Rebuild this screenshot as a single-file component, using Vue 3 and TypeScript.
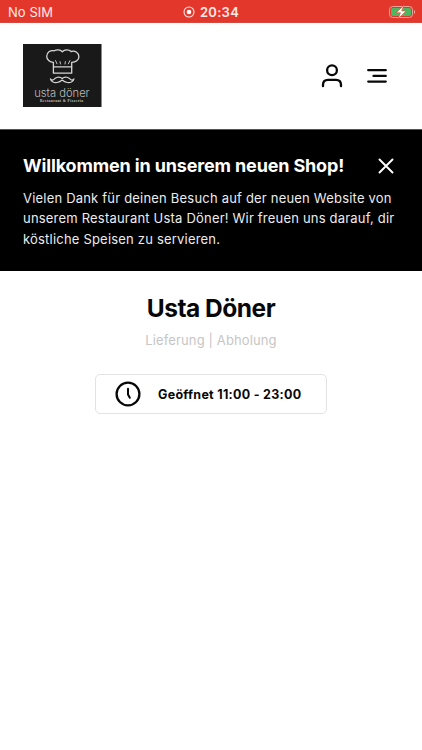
<script setup lang="ts">
import { ref } from 'vue'

const bannerOpen = ref<boolean>(true)
const shop = {
  name: 'Usta Döner',
  services: ['Lieferung', 'Abholung'],
  hours: 'Geöffnet 11:00 - 23:00',
}
</script>

<template>
  <div class="screen">
    <div class="status">
      <span class="carrier">No SIM</span>
      <span class="clock">
        <svg width="12" height="12" viewBox="0 0 12 12">
          <circle cx="6" cy="6" r="5" fill="none" stroke="#fbe3e0" stroke-width="1.1" />
          <circle cx="6" cy="6" r="2.3" fill="#fff" />
        </svg>
        <span class="time">20:34</span>
      </span>
      <svg class="battery" width="27" height="16" viewBox="0 0 27 16">
        <rect x="0.5" y="2.5" width="23" height="11" rx="3.2" fill="none" stroke="#f3a29b" />
        <rect x="2" y="4" width="20" height="8" rx="1.8" fill="#4cb661" />
        <path d="M25 6v4c1.6-.6 1.6-3.4 0-4z" fill="#f3a29b" />
        <path d="M14.8 1.2 7.3 8.7h4.2L9.2 14.8l7.8-7.9h-4.3z" fill="#fff" stroke="#e2483b" stroke-width="0.6" />
      </svg>
    </div>

    <header class="header">
      <svg class="logo" width="79" height="63" viewBox="0 0 79 63">
        <rect width="78.5" height="63" fill="#191919" />
        <g fill="none" stroke="#d6d6d6" stroke-width="1.3" stroke-linecap="round" stroke-linejoin="round">
          <path d="M30.4 22.8v-4.5c-3.7-.1-6.7-2.6-6.7-6 0-3.7 3.5-6.4 7.6-5.5 2-1.2 6-1.3 8 .9 2.2-2.4 6.8-2.2 8.8-.2 4.2-1.1 7.8 1.4 7.8 5.2 0 3.2-3.1 5.7-7.2 5.6v4.5" />
          <path d="M30.4 22.8h18.3v6.4H30.4z" />
          <path d="M34 19.8l-1.5-3.2M37.5 20l-.5-2.4M42 20l.4-2.4M45.4 19.8l1.5-3.2" stroke-width="0.9" />
          <path d="M39.2 34.5c-3-2.8-6.8-.9-8 .7-1.1 1.2-2.3 1.2-3.8-.3.6 3.1 4 4.1 6.7 3.6 2.5-.5 4.2-1.7 5.1-2.5.9.8 2.6 2 5.1 2.5 2.7.5 6.1-.5 6.7-3.6-1.5 1.5-2.7 1.5-3.8.3-1.2-1.6-5-3.5-8-.7z" stroke-width="1.15" />
        </g>
        <text class="logo-name" x="38.9" y="53.4" text-anchor="middle" textLength="55.5" lengthAdjust="spacingAndGlyphs">usta döner</text>
        <text class="logo-sub" x="38.5" y="58" text-anchor="middle" textLength="43">Restaurant &amp; Pizzeria</text>
      </svg>
      <nav class="actions">
        <svg width="22" height="24" viewBox="0 0 22 24" fill="none" stroke="#080808" stroke-width="2.3" stroke-linecap="round">
          <circle cx="11" cy="6.3" r="4.9" />
          <path d="M2 22.2v-1.4c0-3.1 2-5 5-5h8c3 0 5 1.9 5 5v1.4" />
        </svg>
        <svg width="22" height="24" viewBox="0 0 22 24" fill="none" stroke="#080808" stroke-width="2.2" stroke-linecap="round">
          <path d="M2.2 6.2h17.6M7.5 11.9h12.3M2.2 17.6h17.6" />
        </svg>
      </nav>
    </header>

    <section v-if="bannerOpen" class="banner">
      <div class="banner-head">
        <h2>Willkommen in unserem neuen Shop!</h2>
        <button class="close" aria-label="Schließen" @click="bannerOpen = false">
          <svg width="16" height="16" viewBox="0 0 16 16" fill="none" stroke="#fff" stroke-width="1.9" stroke-linecap="round">
            <path d="M1.5 1.5l13 13M14.5 1.5l-13 13" />
          </svg>
        </button>
      </div>
      <p>
        Vielen Dank für deinen Besuch auf der neuen Website von<br />
        unserem Restaurant Usta Döner! Wir freuen uns darauf, dir<br />
        köstliche Speisen zu servieren.
      </p>
    </section>

    <main class="shop">
      <h1>{{ shop.name }}</h1>
      <p class="services">{{ shop.services.join(' | ') }}</p>
      <div class="hours">
        <svg width="26" height="26" viewBox="0 0 26 26" fill="none" stroke="#080808" stroke-width="2.3" stroke-linecap="round" stroke-linejoin="round">
          <circle cx="13" cy="13" r="11.4" />
          <path d="M13 7.7v5.8l1.8 3.3" stroke-width="2" />
        </svg>
        <span>{{ shop.hours }}</span>
      </div>
    </main>
  </div>
</template>

<style>
body {
  background: #fff;
}
</style>

<style scoped>
.screen {
  min-height: 750px;
  background: #fff;
  color: #080808;
  font-family: Inter, 'Liberation Sans', sans-serif;
}
h1,
h2,
p {
  margin: 0;
}
.status {
  box-sizing: border-box;
  height: 23px;
  padding: 1px 6px 0 8px;
  display: grid;
  grid-template-columns: 1fr auto 1fr;
  align-items: center;
  background: #e3372c;
  border-bottom: 1px solid #d8493f;
  color: #fde9e7;
}
.carrier {
  font-size: 13px;
  letter-spacing: 0.05px;
}
.clock {
  display: flex;
  align-items: center;
  gap: 5px;
  padding-right: 2px;
}
.time {
  font-size: 13px;
  font-weight: 600;
  letter-spacing: 0.3px;
}
.battery {
  justify-self: end;
}
.header {
  box-sizing: border-box;
  height: 106px;
  padding: 0 34px 1px 23px;
  display: flex;
  align-items: center;
  justify-content: space-between;
}
.logo {
  display: block;
}
.logo-name {
  font: 300 11px Inter, sans-serif;
  fill: #bcbcbc;
}
.logo-sub {
  font: 700 3.6px 'Liberation Serif', serif;
  fill: #c4c4c4;
}
.actions {
  display: flex;
  gap: 23px;
}
.banner {
  box-sizing: border-box;
  height: 142px;
  padding: 23px 23px 0;
  background: #000;
  border-top: 1px solid #555;
  color: #fff;
}
.banner-head {
  display: flex;
  align-items: center;
  justify-content: space-between;
  height: 25px;
  padding-right: 5px;
}
h2 {
  font-size: 18px;
  line-height: 25px;
  font-weight: 700;
  letter-spacing: -0.15px;
  white-space: nowrap;
}
.close {
  display: flex;
  padding: 0;
  border: 0;
  background: none;
}
.banner p {
  margin-top: 10px;
  color: #ececec;
  font-size: 13px;
  line-height: 20.4px;
  letter-spacing: 0.2px;
  white-space: nowrap;
}
.shop {
  display: flex;
  flex-direction: column;
  align-items: center;
  padding-top: 21px;
}
h1 {
  font-size: 24.5px;
  line-height: 32px;
  font-weight: 700;
  letter-spacing: -0.5px;
}
.services {
  margin-top: 6px;
  color: #c6c6c6;
  font-size: 13px;
  line-height: 20px;
  letter-spacing: 0.13px;
}
.hours {
  box-sizing: border-box;
  width: 232px;
  height: 40px;
  margin-top: 24px;
  padding-left: 19px;
  display: flex;
  align-items: center;
  gap: 17px;
  border: 1px solid #e3e3e3;
  border-radius: 5px;
  font-size: 12.5px;
  font-weight: 700;
  letter-spacing: 0.28px;
  white-space: nowrap;
}
</style>
